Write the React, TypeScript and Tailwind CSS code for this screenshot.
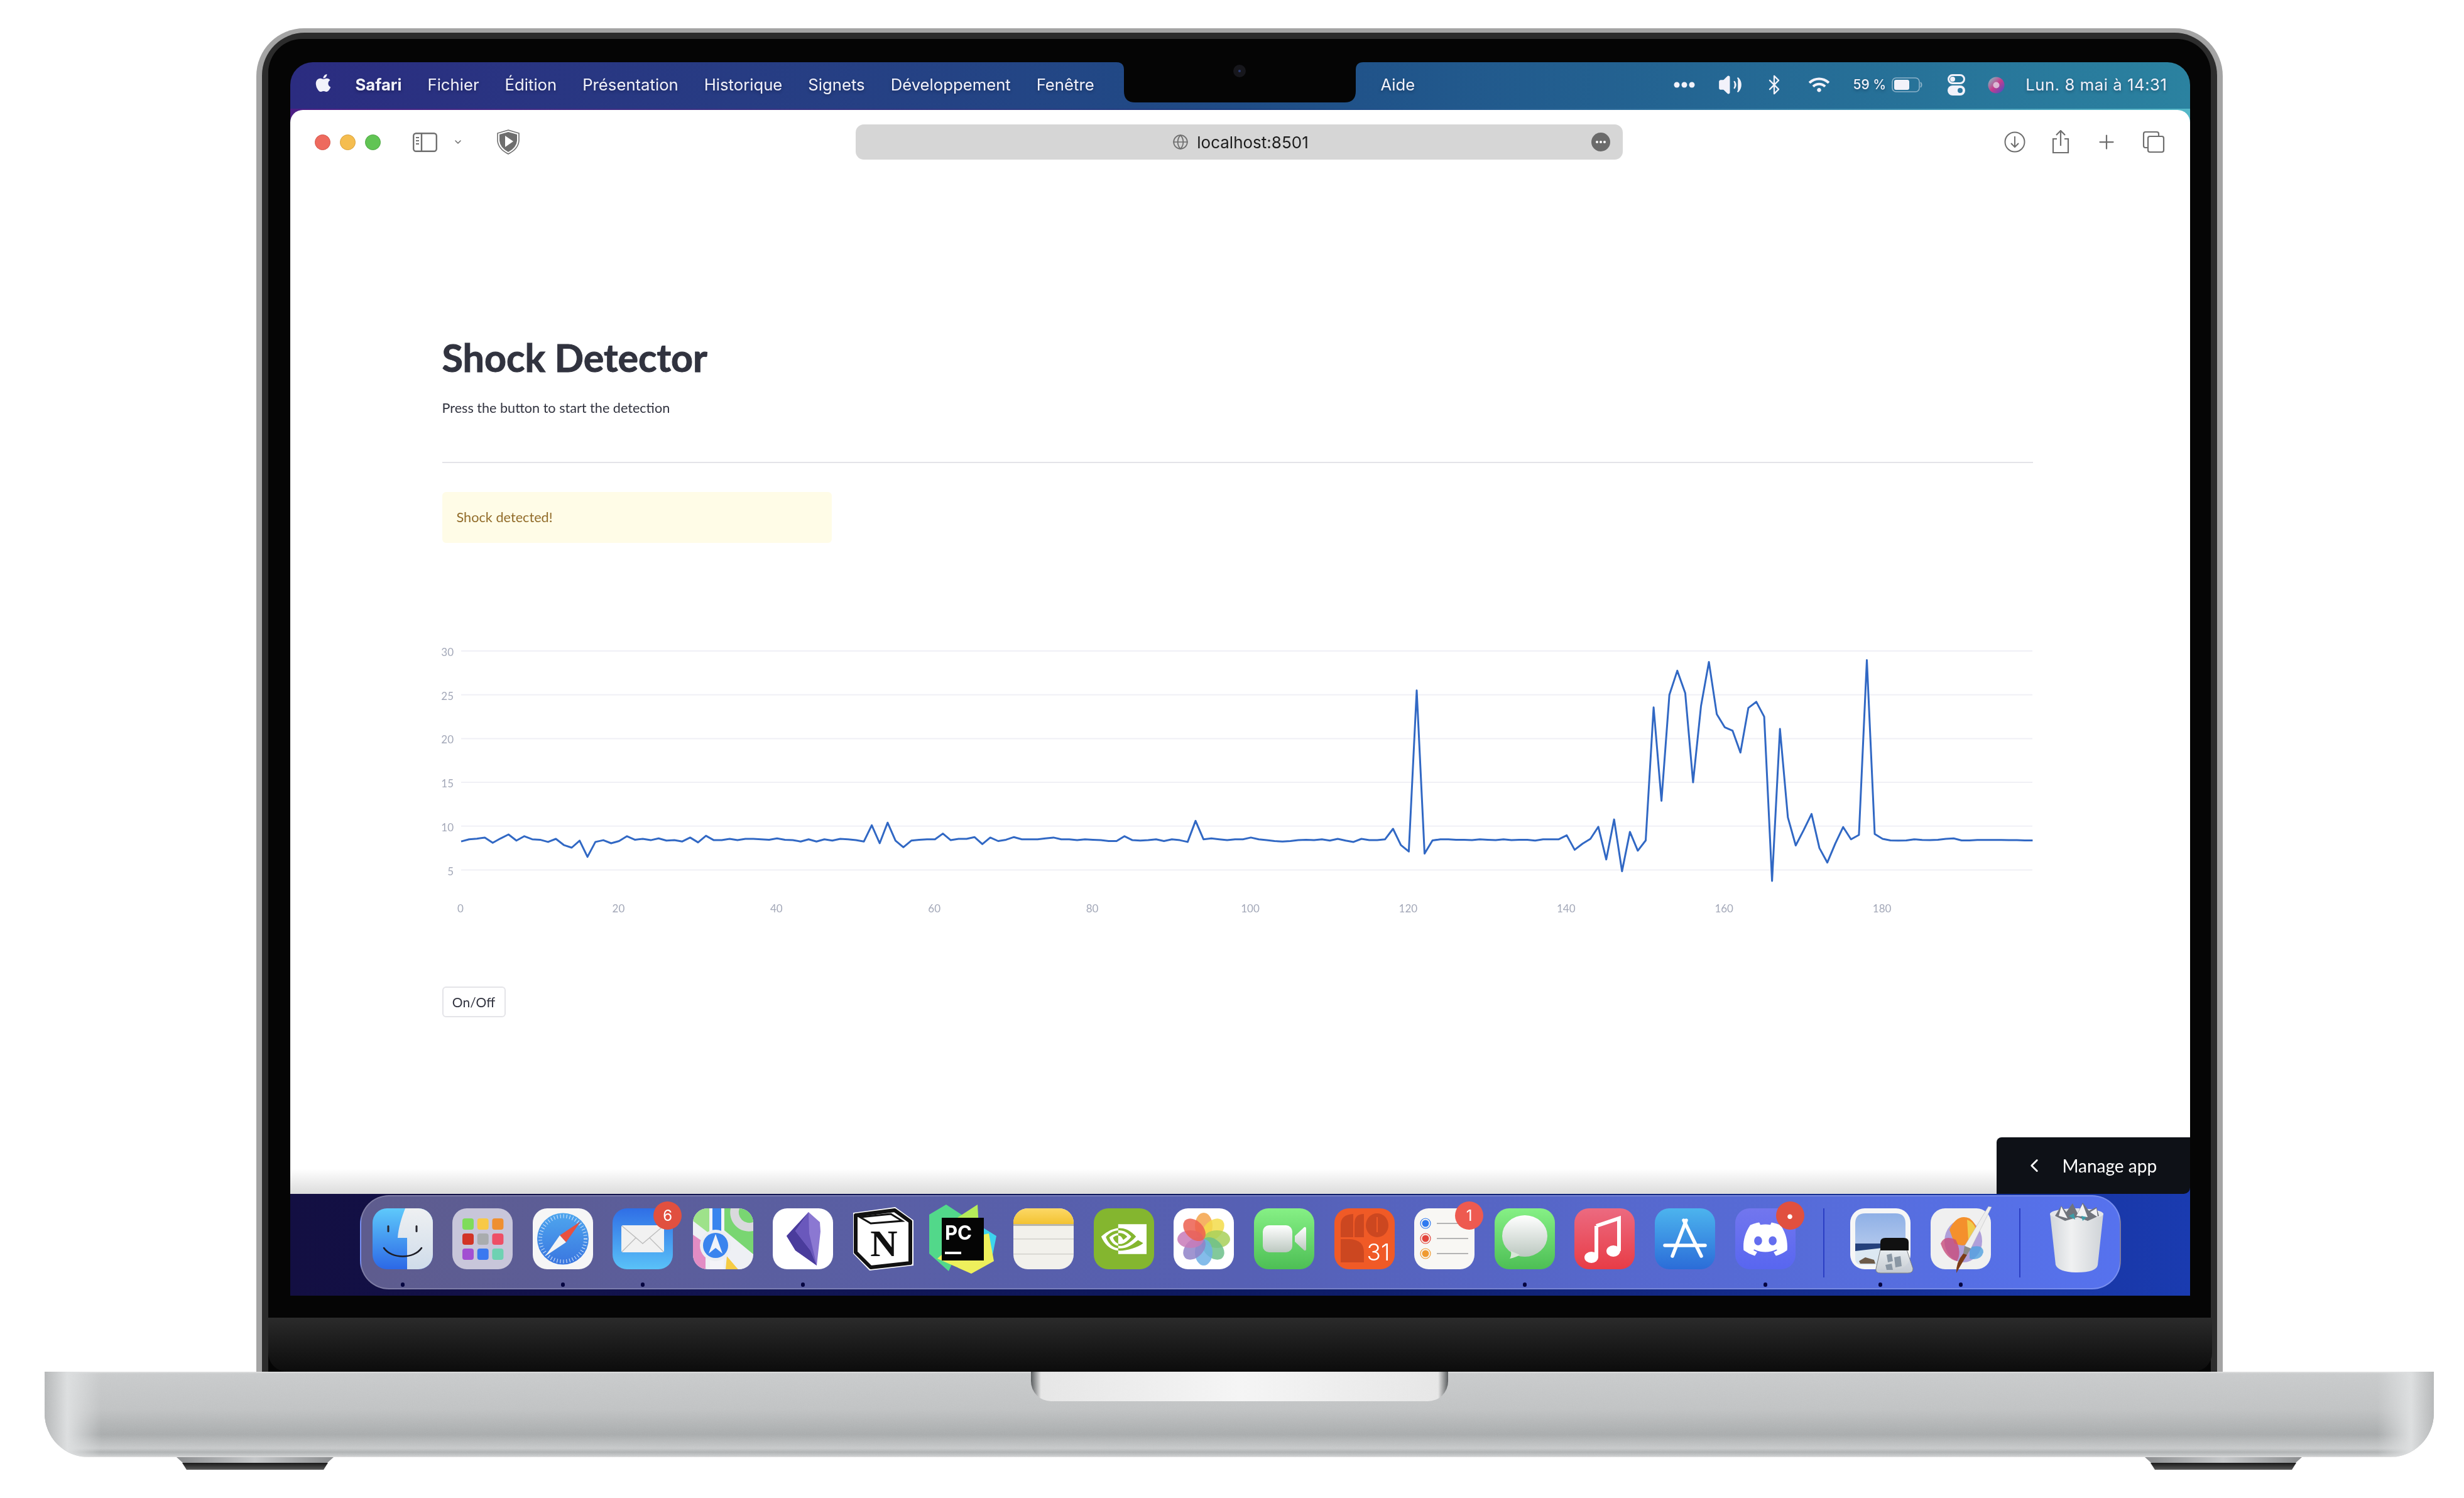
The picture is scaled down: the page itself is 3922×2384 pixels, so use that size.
import { FaApple, FaDiscord, FaWifi } from 'react-icons/fa';
import { SiNvidia } from 'react-icons/si';
import { Bluetooth, ChevronDown, ChevronLeft, Globe, Plus, Volume2 } from 'lucide-react';

const MENU = ['Fichier', 'Édition', 'Présentation', 'Historique', 'Signets', 'Développement', 'Fenêtre'];

// sensor values read off the chart, one per x index (0..199)
const SERIES = [
  8.26, 8.5, 8.57, 8.7, 8.1, 8.6, 9.05, 8.35, 8.85, 8.5, 8.45, 8.2, 8.55, 7.85, 7.55, 8.35, 6.5, 8.2, 8.4, 8.05,
  8.3, 8.85, 8.45, 8.55, 8.4, 8.6, 8.35, 8.4, 8.25, 8.7, 8.15, 8.9, 8.4, 8.4, 8.55, 8.4, 8.55, 8.55, 8.5, 8.45,
  8.6, 8.45, 8.4, 8.25, 8.5, 8.25, 8.5, 8.35, 8.55, 8.5, 8.4, 8.25, 10.1, 8.05, 10.4, 8.35, 7.6, 8.35, 8.45, 8.5,
  8.5, 9.15, 8.4, 8.55, 8.55, 8.75, 7.95, 8.7, 8.3, 8.45, 8.75, 8.5, 8.5, 8.5, 8.6, 8.7, 8.5, 8.5, 8.4, 8.5,
  8.45, 8.4, 8.3, 8.3, 8.85, 8.4, 8.35, 8.4, 8.5, 8.3, 8.5, 8.4, 8.2, 10.6, 8.5, 8.6, 8.5, 8.4, 8.5, 8.5,
  8.7, 8.5, 8.4, 8.3, 8.25, 8.3, 8.4, 8.45, 8.4, 8.5, 8.35, 8.55, 8.35, 8.2, 8.55, 8.4, 8.4, 8.5, 9.7, 7.85,
  7.1, 25.5, 6.87, 8.37, 8.5, 8.5, 8.45, 8.45, 8.4, 8.5, 8.45, 8.4, 8.5, 8.4, 8.45, 8.45, 8.35, 8.5, 8.5, 8.5,
  8.95, 7.3, 8, 8.55, 9.93, 6.2, 10.77, 4.85, 9.35, 7.2, 8.37, 23.56, 12.9, 25, 27.75, 25.2, 15, 23.7, 28.75, 22.8,
  21.3, 20.9, 18.4, 23.5, 24.2, 22.5, 3.75, 21.1, 11, 7.8, 9.55, 11.4, 7.5, 5.85, 8, 9.9, 8.5, 9, 28.95, 9.1,
  8.55, 8.37, 8.35, 8.37, 8.5, 8.42, 8.4, 8.45, 8.55, 8.6, 8.37, 8.37, 8.42, 8.42, 8.42, 8.42, 8.4, 8.4, 8.37, 8.37,
];

function Defs() {
  return (
    <svg className="absolute w-0 h-0">
      <defs>
        <clipPath id="tile"><rect width="96" height="97" rx="23" /></clipPath>
        <linearGradient id="finder" x1="0" y1="0" x2="0" y2="1"><stop offset="0" stopColor="#5ec9fb" /><stop offset="1" stopColor="#2c68e6" /></linearGradient>
        <linearGradient id="finderR" x1="0" y1="0" x2="0" y2="1"><stop offset="0" stopColor="#eef0f2" /><stop offset="1" stopColor="#cfdcea" /></linearGradient>
        <linearGradient id="mail" x1="0" y1="0" x2="0" y2="1"><stop offset="0" stopColor="#2f6ee6" /><stop offset="1" stopColor="#5ac2f8" /></linearGradient>
        <linearGradient id="green" x1="0" y1="0" x2="0" y2="1"><stop offset="0" stopColor="#86f085" /><stop offset="1" stopColor="#4dbf55" /></linearGradient>
        <linearGradient id="glass" x1="0" y1="0" x2="0" y2="1"><stop offset="0" stopColor="#ffffff" /><stop offset="1" stopColor="#bcc8c0" /></linearGradient>
        <linearGradient id="music" x1="0" y1="0" x2="0" y2="1"><stop offset="0" stopColor="#ec6a80" /><stop offset="1" stopColor="#e83c46" /></linearGradient>
        <linearGradient id="store" x1="0" y1="0" x2="0" y2="1"><stop offset="0" stopColor="#4cb4ee" /><stop offset="1" stopColor="#2b6cd8" /></linearGradient>
        <linearGradient id="notes" x1="0" y1="0" x2="0" y2="1"><stop offset="0" stopColor="#fcd866" /><stop offset="1" stopColor="#f3c332" /></linearGradient>
        <linearGradient id="trash" x1="0" y1="0" x2="1" y2="0"><stop offset="0" stopColor="#d2d6da" /><stop offset="0.4" stopColor="#f0f1f2" /><stop offset="1" stopColor="#cfd3d7" /></linearGradient>
        <linearGradient id="sky" x1="0" y1="0" x2="0" y2="1"><stop offset="0" stopColor="#8fb0e6" /><stop offset="1" stopColor="#b9cdee" /></linearGradient>
        <linearGradient id="compass" x1="0" y1="0" x2="0" y2="1"><stop offset="0" stopColor="#4ea6ee" /><stop offset="1" stopColor="#3a76e0" /></linearGradient>
        <linearGradient id="jar" x1="0" y1="0" x2="0" y2="1"><stop offset="0" stopColor="#e8ecef" stopOpacity="0.9" /><stop offset="1" stopColor="#c4cad0" /></linearGradient>
        <linearGradient id="siri" x1="0" y1="0" x2="1" y2="1"><stop offset="0" stopColor="#7ad0c8" /><stop offset="0.5" stopColor="#c83c8c" /><stop offset="1" stopColor="#3c50c8" /></linearGradient>
        <filter id="grain"><feTurbulence type="fractalNoise" baseFrequency="0.9" numOctaves="2" /><feColorMatrix type="saturate" values="0" /></filter>
      </defs>
    </svg>
  );
}

function Tile({ children }: { children: React.ReactNode }) {
  return (
    <svg viewBox="0 0 96 97" className="w-[96px] h-[97px] overflow-visible">
      {children}
    </svg>
  );
}

const Finder = () => (
  <Tile>
    <g clipPath="url(#tile)">
      <rect width="96" height="97" fill="url(#finder)" />
      <path d="M52 0C46 15 41 32 40 47H55V97H96V0Z" fill="url(#finderR)" />
    </g>
    <rect x="23.5" y="27" width="3" height="11" rx="1.5" fill="#27272f" />
    <rect x="68.5" y="27" width="3" height="11" rx="1.5" fill="#27272f" />
    <path d="M18 63C30 81 66 81 78 63" fill="none" stroke="#1c1c24" strokeWidth="2.6" strokeLinecap="round" />
  </Tile>
);

const Launchpad = () => {
  const colors = ['#7fdc5a', '#f8c946', '#ef8f30', '#d23426', '#a9acae', '#ee4f66', '#a24fd2', '#3a78f0', '#6ed2b2'];
  return (
    <Tile>
      <rect width="96" height="97" rx="23" fill="#c8c6da" />
      {colors.map((c, i) => (
        <rect key={c} x={16 + (i % 3) * 23.7} y={16 + Math.floor(i / 3) * 24} width="18" height="18" rx="4" fill={c} />
      ))}
    </Tile>
  );
};

const Safari = () => (
  <Tile>
    <rect width="96" height="97" rx="23" fill="#f6f6f6" />
    <circle cx="48" cy="48.5" r="41" fill="url(#compass)" />
    <circle cx="48" cy="48.5" r="36" fill="none" stroke="#d8e8fa" strokeWidth="6" strokeDasharray="1 4" />
    <path d="M76 21L43 43L53 54Z" fill="#e8503f" />
    <path d="M20 76L43 43L53 54Z" fill="#f4f4f4" />
  </Tile>
);

const Badge = ({ label, fill = 'bg-[#e1503f]' }: { label: string; fill?: string }) => (
  <span className={`absolute left-[65px] -top-[11px] w-[45px] h-[45px] rounded-full ${fill} flex items-center justify-center text-white text-[24px] font-['Inter',sans-serif]`}>
    {label}
  </span>
);

const Mail = () => (
  <Tile>
    <rect width="96" height="97" rx="23" fill="url(#mail)" />
    <rect x="14" y="27" width="68" height="43" rx="3" fill="#f1f1f1" />
    <path d="M15 28L48 56L81 28M15 69L37 47M81 69L59 47" fill="none" stroke="#bdbdbd" strokeWidth="1.4" />
  </Tile>
);

const Maps = () => (
  <Tile>
    <g clipPath="url(#tile)">
      <rect width="96" height="97" fill="#eef0f4" />
      <path d="M0 0H26V40L0 20Z" fill="#9ee28a" />
      <path d="M50 0H96V73L50 35Z" fill="#79d672" />
      <path d="M60 0A30 30 0 0 0 96 36V22A17 17 0 0 1 74 0Z" fill="#d9d9dd" />
      <path d="M0 42L20 56V97H0Z" fill="#e28cc4" />
      <path d="M54 76L72 97H52Z" fill="#f6cc44" />
      <path d="M72 97L54 76L62 70L96 97Z" fill="#eef0f4" />
      <rect x="27" y="0" width="22" height="97" fill="#f4f4f8" />
      <rect x="31" y="0" width="14" height="40" fill="#3a84ee" />
      <circle cx="36" cy="59" r="25" fill="#eceef2" />
      <circle cx="36" cy="59" r="20" fill="#3a84ee" />
      <path d="M36 41L47 72L36 63L25 72Z" fill="#eef2fa" />
    </g>
  </Tile>
);

const Obsidian = () => (
  <Tile>
    <rect width="96" height="97" rx="23" fill="#ffffff" />
    <path d="M57 6L75 22L76 37L70 91L36 67L22 44Z" fill="#8b78d2" />
    <path d="M57 6L22 44L36 67L70 91L60 67L36 36Z" fill="#4a3c9c" />
    <path d="M57 6L36 36L60 67L70 91L58 40Z" fill="#6a58bc" />
  </Tile>
);

const Notion = () => (
  <Tile>
    <path d="M0 7L67 -2L96 19V91L26 99L0 72Z" fill="#ffffff" />
    <path d="M4 11L66 3L91 21V87L28 94L4 70Z" fill="#fff" stroke="#111111" strokeWidth="6" strokeLinejoin="round" />
    <path d="M11 14L60 9L78 20L28 24Z" fill="#fff" stroke="#111111" strokeWidth="3" />
    <text x="49" y="76" textAnchor="middle" fontFamily="'Liberation Serif', serif" fontWeight="700" fontSize="60" fill="#111111">N</text>
  </Tile>
);

const PyCharm = () => (
  <Tile>
    <path d="M20 -6L-7 10L-7 72L24 100L60 20Z" fill="#52d88a" />
    <path d="M70 -6L36 16L60 40L72 30Z" fill="#b6ec5a" />
    <path d="M74 28L100 44L92 84L60 70Z" fill="#3cd4ee" />
    <path d="M6 80L60 104L96 84L88 40L40 50Z" fill="#eef05c" />
    <rect x="13" y="15" width="67" height="68" fill="#050505" />
    <text x="18" y="50" fontFamily="'Inter', sans-serif" fontWeight="700" fontSize="31" fill="#ffffff">PC</text>
    <rect x="18" y="69" width="26" height="4" fill="#ffffff" />
  </Tile>
);

const Notes = () => (
  <Tile>
    <g clipPath="url(#tile)">
      <rect width="96" height="97" fill="#f2f1ec" />
      <rect width="96" height="25" fill="url(#notes)" />
      <rect y="25" width="96" height="3" fill="#b8b6ae" />
      <rect y="48" width="96" height="1.5" fill="#d2d1cc" />
      <rect y="72" width="96" height="1.5" fill="#d2d1cc" />
    </g>
  </Tile>
);

const Photos = () => {
  const petals = ['#f5a34a', '#f3dc4a', '#a8d05a', '#6cbf8a', '#6fb0e6', '#8f83c8', '#c87ab8', '#ec5f4f'];
  return (
    <Tile>
      <rect width="96" height="97" rx="23" fill="#ffffff" />
      {petals.map((c, i) => (
        <ellipse key={c} cx="48" cy="28" rx="14" ry="21" fill={c} fillOpacity="0.85" transform={`rotate(${i * 45} 48 49)`} />
      ))}
    </Tile>
  );
};

const FaceTime = () => (
  <Tile>
    <rect width="96" height="97" rx="23" fill="url(#green)" />
    <rect x="14" y="27" width="47" height="43" rx="10" fill="url(#glass)" />
    <path d="M65 44L80 30Q83 29 83 33V65Q83 68 80 67L65 53Z" fill="url(#glass)" />
  </Tile>
);

const Calendar = () => (
  <Tile>
    <rect width="96" height="97" rx="23" fill="#f05a26" />
    <path d="M10 46V26Q10 10 30 9V46ZM32 46V24Q32 9 47 9V46Z" fill="#cc4720" />
    <ellipse cx="68" cy="27" rx="18" ry="19" fill="#cc4720" />
    <path d="M10 86V49H24Q47 50 47 70V86Z" fill="#cc4720" />
    <rect x="67" y="14" width="2" height="24" fill="#f05a26" />
    <text x="70" y="83" textAnchor="middle" fontFamily="'Inter', sans-serif" fontWeight="300" fontSize="37" fill="#ffffff">31</text>
  </Tile>
);

const Reminders = () => {
  const dots = [
    { y: 24, c: '#2f7af0' },
    { y: 48, c: '#e2453c' },
    { y: 72, c: '#ef9a30' },
  ];
  return (
    <Tile>
      <rect width="96" height="97" rx="23" fill="#f8f7f4" />
      {dots.map((d) => (
        <g key={d.y}>
          <circle cx="18" cy={d.y} r="5.5" fill={d.c} />
          <circle cx="18" cy={d.y} r="8" fill="none" stroke={d.c} strokeWidth="1.2" />
          <rect x="36" y={d.y - 1} width="50" height="2" fill="#b4b4b4" />
        </g>
      ))}
    </Tile>
  );
};

const Messages = () => (
  <Tile>
    <rect width="96" height="97" rx="23" fill="url(#green)" />
    <ellipse cx="48" cy="44" rx="36" ry="33" fill="url(#glass)" />
    <path d="M26 68Q27 76 24 80Q34 78 40 74Z" fill="#d8e6d8" />
  </Tile>
);

const Music = () => (
  <Tile>
    <rect width="96" height="97" rx="23" fill="url(#music)" />
    <path d="M35 28L71 16V68" fill="none" stroke="#ffffff" strokeWidth="6" />
    <path d="M35 28V78" stroke="#ffffff" strokeWidth="6" />
    <ellipse cx="27" cy="78" rx="11" ry="9" fill="#ffffff" />
    <ellipse cx="62" cy="68" rx="11" ry="9" fill="#ffffff" />
  </Tile>
);

const AppStore = () => (
  <Tile>
    <rect width="96" height="97" rx="23" fill="url(#store)" />
    <g stroke="#ffffff" strokeWidth="5.5" strokeLinecap="round">
      <path d="M50 19L28 76" />
      <path d="M46 19L74 76" />
      <path d="M16 59H80" />
    </g>
  </Tile>
);

const Discord = () => (
  <div className="w-[96px] h-[97px] rounded-[23px] bg-linear-to-b from-[#7276ee] to-[#5866f0] flex items-center justify-center">
    <FaDiscord className="w-[76px] h-[76px] text-white" />
  </div>
);

const Nvidia = () => (
  <div className="w-[96px] h-[97px] rounded-[23px] bg-[#84b62f] flex items-center justify-center">
    <SiNvidia className="w-[72px] h-[72px] text-white" />
  </div>
);

const Preview = () => (
  <Tile>
    <rect width="96" height="97" rx="23" fill="#f6f6f6" />
    <path d="M8 24Q8 8 24 8H72Q88 8 88 24V72H8Z" fill="url(#sky)" />
    <rect x="8" y="56" width="80" height="16" fill="#25417c" />
    <path d="M8 68L60 62L88 68V80Q88 90 76 90H20Q8 90 8 80Z" fill="#dce8f2" />
    <path d="M14 84L24 78L38 82L40 88H16Z" fill="#6c5a48" />
    <path d="M48 66H90L100 96Q100 103 92 103H48Q40 103 41 96Z" fill="url(#jar)" stroke="#7a7e82" strokeWidth="1" />
    <path d="M58 74L66 72L68 84L60 86ZM70 78L80 76L82 92L72 94ZM56 90L66 88L68 98L58 98Z" fill="#8a97a4" />
    <path d="M48 54Q48 47 56 47H85Q93 47 93 54V67H48Z" fill="#111111" />
  </Tile>
);

const Pixelmator = () => (
  <Tile>
    <rect width="96" height="97" rx="23" fill="#f0f0f0" />
    <ellipse cx="52" cy="52" rx="30" ry="34" fill="#7a5cc8" fillOpacity="0.55" />
    <path d="M30 34Q42 8 62 16Q80 30 70 50Q56 64 38 56Z" fill="#f4902c" />
    <path d="M58 18Q74 24 72 44L60 50Z" fill="#f0cc4c" />
    <path d="M16 56Q22 42 40 50Q50 70 42 84Q24 80 16 56Z" fill="#c84c7c" fillOpacity="0.8" />
    <path d="M62 62Q84 56 84 70Q80 84 62 80Z" fill="#50a0e0" fillOpacity="0.8" />
    <path d="M92 -3L97 -2L64 64L54 60Z" fill="#ededed" stroke="#b0b0b0" strokeWidth="0.5" />
    <path d="M54 60L64 64L58 74L52 72Z" fill="#8a8a8a" />
    <path d="M52 72L58 74Q48 90 41 103Q40 86 52 72Z" fill="#7c3c18" />
  </Tile>
);

const Trash = () => (
  <Tile>
    <path d="M0 8H85L76 90Q74 102 43 102Q14 102 9 90Z" fill="url(#trash)" />
    <ellipse cx="42.5" cy="9" rx="42.5" ry="9" fill="#e4e6ea" />
    <path d="M8 12L18 -4L26 6L36 -8L44 8L52 -9L62 4L74 -2L78 12L60 20L44 14L24 20Z" fill="#70747c" />
    <path d="M14 12L18 -3L28 16ZM42 12L52 -7L60 14ZM64 6L74 0L76 14Z" fill="#f2f2f4" />
    <path d="M30 12L38 8L40 18ZM50 12L58 14L52 20Z" fill="#3c9ca8" />
  </Tile>
);

type DockApp = { Icon: () => React.ReactNode; running?: boolean; badge?: string; badgeFill?: string };

const APPS: DockApp[] = [
  { Icon: Finder, running: true },
  { Icon: Launchpad },
  { Icon: Safari, running: true },
  { Icon: Mail, running: true, badge: '6' },
  { Icon: Maps },
  { Icon: Obsidian, running: true },
  { Icon: Notion },
  { Icon: PyCharm },
  { Icon: Notes },
  { Icon: Nvidia },
  { Icon: Photos },
  { Icon: FaceTime },
  { Icon: Calendar },
  { Icon: Reminders, badge: '1', badgeFill: 'bg-[#ee5a50]' },
  { Icon: Messages, running: true },
  { Icon: Music },
  { Icon: AppStore },
  { Icon: Discord, running: true, badge: '•' },
];

function DockItem({ app }: { app: DockApp }) {
  return (
    <div className="relative w-[96px] shrink-0 flex flex-col items-center">
      <app.Icon />
      {app.badge && <Badge label={app.badge} fill={app.badgeFill} />}
      {app.running && <span className="mt-[21px] w-[6px] h-[7px] rounded-full bg-[#060640]" />}
    </div>
  );
}

function Dock() {
  return (
    <div className="ml-[111px] w-[2803px] h-[150px] rounded-[46px] border-2 border-white/20 bg-linear-to-r from-[#5e5c8e] via-[#5660b4] to-[#5672ee] pl-[18px] pt-[19px] flex items-start">
      <div className="flex gap-[31.6px]">
        {APPS.map((app, i) => (
          <DockItem key={i} app={app} />
        ))}
      </div>
      <span className="ml-[44px] mr-[41px] w-[2px] h-[110px] bg-[#2b3ec4]" />
      <div className="flex gap-[32px]">
        <DockItem app={{ Icon: Preview, running: true }} />
        <DockItem app={{ Icon: Pixelmator, running: true }} />
      </div>
      <span className="ml-[45px] mr-[47px] w-[2px] h-[110px] bg-[#2b3ec4]" />
      <DockItem app={{ Icon: Trash }} />
    </div>
  );
}

function MenuBar() {
  return (
    <div className="h-[74px] flex bg-linear-to-r from-[#2b2c80] via-[#1f4c86] via-50% to-[#2b82a0] text-[#f2f2fa] text-[25.7px] font-['Inter',sans-serif] [text-shadow:0_2px_5px_rgba(0,0,30,0.35)]">
      <div className="w-[1315px] shrink-0 pl-[38px] pt-[17px] flex items-start">
        <FaApple className="w-[29px] h-[32px] mr-[37px] shrink-0" />
        <span className="font-bold mr-[41px]">Safari</span>
        <div className="flex gap-[41px]">
          {MENU.map((m) => (
            <span key={m}>{m}</span>
          ))}
        </div>
      </div>
      <svg viewBox="0 0 393 64" className="w-[393px] h-[64px] shrink-0">
        <path d="M0 0Q12 0 12 12V46Q12 64 30 64H363Q381 64 381 46V12Q381 0 393 0Z" fill="#050505" />
        <circle cx="196" cy="14" r="10" fill="#17171c" />
        <circle cx="196" cy="14" r="2" fill="#2c3a70" />
      </svg>
      <div className="flex-1 pl-[28px] pr-[36px] pt-[17px] flex items-start">
        <span>Aide</span>
        <div className="ml-auto flex items-center h-[38px]">
          <svg viewBox="0 0 34 10" className="w-[34px] h-[10px]">
            <circle cx="5" cy="5" r="4.5" fill="#f2f2fa" /><circle cx="17" cy="5" r="4.5" fill="#f2f2fa" /><circle cx="29" cy="5" r="4.5" fill="#f2f2fa" />
          </svg>
          <Volume2 className="ml-[36px] w-[40px] h-[40px] fill-[#f2f2fa]" strokeWidth={1.4} />
          <Bluetooth className="ml-[33px] w-[34px] h-[34px]" strokeWidth={1.6} />
          <FaWifi className="ml-[38px] w-[33px] h-[28px]" />
          <span className="ml-[38px] text-[21px] font-medium">59 %</span>
          <svg viewBox="0 0 50 24" className="ml-[9px] w-[50px] h-[24px]">
            <rect x="1" y="1" width="43" height="22" rx="6" fill="none" stroke="#f2f2fa" strokeOpacity="0.5" strokeWidth="1.6" />
            <rect x="4" y="4" width="24" height="16" rx="3" fill="#f2f2fa" />
            <path d="M46 8Q49 12 46 16" fill="none" stroke="#f2f2fa" strokeOpacity="0.5" strokeWidth="2" />
          </svg>
          <svg viewBox="0 0 28 34" className="ml-[39px] w-[28px] h-[34px]">
            <rect x="1.5" y="1.5" width="25" height="13" rx="6.5" fill="none" stroke="#f2f2fa" strokeWidth="3" />
            <circle cx="8" cy="8" r="4" fill="#f2f2fa" />
            <rect x="0" y="18" width="28" height="16" rx="8" fill="#f2f2fa" />
            <circle cx="20" cy="26" r="4" fill="#2b78a0" />
          </svg>
          <svg viewBox="0 0 27 27" className="ml-[36px] w-[27px] h-[27px]">
            <circle cx="13.5" cy="13.5" r="13" fill="url(#siri)" />
            <circle cx="13.5" cy="13.5" r="5" fill="#e8e8f0" fillOpacity="0.7" />
          </svg>
          <span className="ml-[33px] whitespace-nowrap tracking-[0.55px]">Lun. 8 mai à 14:31</span>
        </div>
      </div>
    </div>
  );
}

function Toolbar() {
  return (
    <div className="h-[102px] flex items-center text-[#6e6e6e]">
      <div className="w-[900px] shrink-0 pl-[39px] flex items-center">
        <span className="w-[25px] h-[25px] rounded-full bg-[#ee6a5e] border border-[#d3574c]" />
        <span className="ml-[15px] w-[25px] h-[25px] rounded-full bg-[#f5bd4f] border border-[#d8a23e]" />
        <span className="ml-[15px] w-[25px] h-[25px] rounded-full bg-[#61c454] border border-[#4fa845]" />
        <svg viewBox="0 0 39 31" className="ml-[51px] w-[39px] h-[31px]" fill="none" stroke="#6e6e6e" strokeWidth="2.4">
          <rect x="1.2" y="1.2" width="36.6" height="28.6" rx="4" />
          <path d="M14 1.5V29.5" />
          <path d="M5 8H10M5 13H10M5 18H10" strokeWidth="2" />
        </svg>
        <ChevronDown className="ml-[25px] w-[16px] h-[16px]" strokeWidth={2.4} />
        <svg viewBox="0 0 36 40" className="ml-[54px] w-[36px] h-[40px]">
          <path d="M18 1L35 6V18Q34 31 18 39Q2 31 1 18V6Z" fill="#fff" stroke="#6e6e6e" strokeWidth="1.6" />
          <path d="M18 4L32 8V18Q31 29 18 36Q5 29 4 18V8Z" fill="#6e6e6e" />
          <path d="M13 10L26 19L13 28Z" fill="#ffffff" />
        </svg>
      </div>
      <div className="relative w-[1221px] h-[56px] pl-[5px] rounded-[13px] bg-[#d6d6d6] flex items-center justify-center text-[26px] text-[#1c1c1c] font-['Inter',sans-serif]">
        <Globe className="mr-[13px] w-[26px] h-[26px] text-[#6e6e6e]" strokeWidth={1.6} />
        <span>localhost:8501</span>
        <span className="absolute right-[20px] top-[13px] w-[30px] h-[30px] rounded-full bg-[#6b6b6b] flex items-center justify-center gap-[2px]">
          <i className="w-[4px] h-[4px] rounded-full bg-white" />
          <i className="w-[4px] h-[4px] rounded-full bg-white" />
          <i className="w-[4px] h-[4px] rounded-full bg-white" />
        </span>
      </div>
      <div className="flex-1 flex items-center justify-end pr-[40px]">
        <svg viewBox="0 0 34 34" className="w-[34px] h-[34px]" fill="none" stroke="#6e6e6e" strokeWidth="2">
          <circle cx="17" cy="17" r="15.5" />
          <path d="M17 8V25M11 19L17 25L23 19" />
        </svg>
        <svg viewBox="0 0 30 38" className="ml-[41px] w-[30px] h-[38px]" fill="none" stroke="#6e6e6e" strokeWidth="2.2">
          <path d="M9 14H3V36H27V14H21" />
          <path d="M15 1V25M8 8L15 1L22 8" />
        </svg>
        <Plus className="ml-[40px] w-[36px] h-[36px]" strokeWidth={1.5} />
        <svg viewBox="0 0 36 36" className="ml-[39px] w-[36px] h-[36px]" fill="none" stroke="#6e6e6e" strokeWidth="2.2">
          <path d="M8 27H5Q2 27 2 24V5Q2 2 5 2H23Q26 2 26 5V8" />
          <rect x="9" y="9" width="25" height="25" rx="3" />
        </svg>
      </div>
    </div>
  );
}

function Chart() {
  const x = (i: number) => 30 + i * 12.57;
  const y = (v: number) => 365.5 - (v - 5) * 13.94;
  const points = SERIES.map((v, i) => `${x(i).toFixed(1)},${y(v).toFixed(1)}`).join(' ');
  return (
    <svg viewBox="0 0 2532 450" className="w-[2532px] h-[450px] overflow-visible font-['Lato',sans-serif]">
      {[5, 10, 15, 20, 25, 30].map((v) => (
        <g key={v}>
          <line x1="30" x2="2531" y1={y(v)} y2={y(v)} stroke="#f0f0f6" strokeWidth="2" />
          <text x="18" y={y(v) + 8} textAnchor="end" fontSize="17" fill="#a3a8b8">{v}</text>
        </g>
      ))}
      {[0, 20, 40, 60, 80, 100, 120, 140, 160, 180].map((t) => (
        <text key={t} x={x(t) - 1} y="433" textAnchor="middle" fontSize="17" fill="#a3a8b8">{t}</text>
      ))}
      <polyline points={points} fill="none" stroke="#3168c4" strokeWidth="3" strokeLinejoin="round" />
    </svg>
  );
}

function BrowserWindow() {
  return (
    <div className="relative h-[1725px] rounded-t-[20px] bg-white overflow-hidden flex flex-col">
      <Toolbar />
      <main className="flex-1 pl-[242px] pr-[250px] pt-[260px] text-[#31333f] font-['Lato',sans-serif]">
        <h1 className="text-[61px] leading-[64px] font-bold [-webkit-text-stroke:1px_#31333f]">Shock Detector</h1>
        <p className="mt-[33px] text-[21.6px] leading-[30px]">Press the button to start the detection</p>
        <hr className="mt-[71px] border-0 h-[2px] bg-[#e4e4e8]" />
        <div className="mt-[46px] w-[620px] h-[81px] rounded-[6px] bg-[#fffce7] flex items-center pl-[23px] text-[21.7px] text-[#926c2a]">
          Shock detected!
        </div>
        <div className="mt-[155px]">
          <Chart />
        </div>
        <button className="mt-[101px] w-[101px] h-[49px] rounded-[6px] border-2 border-[#e4e4e8] bg-white text-[21px] text-[#31333f]">
          On/Off
        </button>
      </main>
      <div className="h-[40px] bg-linear-to-b from-white to-[#dcdcdc]" />
      <div className="absolute right-0 bottom-0 w-[10px] h-[10px] bg-[#1a3ab0]" />
      <div className="absolute right-0 bottom-0 w-[308px] h-[90px] rounded-tl-[8px] rounded-br-[10px] bg-[#0e1117] flex items-center pl-[43px] text-white text-[28px] font-['Lato',sans-serif]">
        <ChevronLeft className="w-[34px] h-[34px]" strokeWidth={2} />
        <span className="ml-[28px]">Manage app</span>
      </div>
    </div>
  );
}

function Base() {
  return (
    <div className="relative h-[136px] rounded-b-[70px] overflow-hidden bg-[linear-gradient(180deg,#e2e3e3_0px,#c8cacb_3px,#c0c2c3_60px,#a8abac_100px,#c7c9ca_122px,#aeb1b2_128px,#c9cbcc_134px,#e0e0e0_136px)]">
      <div className="absolute inset-y-0 left-0 w-[90px] bg-linear-to-r from-[#b5b7b8] via-[#dcdedf] via-40% to-transparent" />
      <div className="absolute inset-y-0 right-0 w-[90px] bg-linear-to-l from-[#b5b7b8] via-[#dcdedf] via-40% to-transparent" />
      <div className="relative mx-auto w-[664px] h-[47px] rounded-b-[32px] bg-[linear-gradient(90deg,#55585a_0px,#e6e6e6_16px,#f5f5f5_50%,#e6e6e6_calc(100%-16px),#55585a_100%)]" />
      <svg className="absolute inset-0 w-full h-full opacity-[0.14] mix-blend-overlay">
        <rect width="100%" height="100%" filter="url(#grain)" />
      </svg>
    </div>
  );
}

function Foot() {
  return (
    <div className="w-[250px] flex flex-col items-center">
      <div className="w-[250px] h-[9px] bg-linear-to-r from-[#8c8e90] via-[#c6c8ca] to-[#8c8e90] [clip-path:polygon(0_0,100%_0,96%_100%,4%_100%)]" />
      <div className="w-[232px] h-[11px] bg-linear-to-b from-[#1a1a1a] to-[#5a5a5a] [clip-path:polygon(0_0,100%_0,97%_100%,3%_100%)]" />
    </div>
  );
}

export default function App() {
  return (
    <div className="relative w-[3922px] h-[2384px] bg-white overflow-hidden pl-[71px] pr-[48px] pt-[45px] flex flex-col items-stretch">
      <Defs />
      {/* Lid */}
      <div className="mx-auto w-[3130px] h-[2138px] shrink-0 rounded-t-[76px] bg-[#a4a4a4] pt-[7px] px-[9px]">
        <div className="h-full rounded-t-[68px] bg-[#2c2c2c] pt-[10px] px-[10px]">
          <div className="h-full rounded-t-[54px] bg-[#050505] pt-[37px] pl-[35px] pr-[33px] flex flex-col">
            <div className="rounded-t-[36px] overflow-hidden">
              <MenuBar />
              <div className="pt-[2px] bg-linear-to-r from-[#4d1f85] via-[#1c3f80] to-[#55b8c8]">
                <BrowserWindow />
              </div>
              <div className="h-[162px] pt-[2px] bg-linear-to-r from-[#130f42] via-[#0d1a62] to-[#1a3bb0]">
                <Dock />
              </div>
            </div>
            {/* Chin */}
            <div className="-mx-[35px] mt-[35px] flex-1 rounded-b-[30px] bg-linear-to-b from-[#2b2b2b] to-[#0c0c0c]" />
          </div>
        </div>
      </div>
      <Base />
      <div className="flex justify-between px-[210px]">
        <Foot />
        <Foot />
      </div>
    </div>
  );
}
